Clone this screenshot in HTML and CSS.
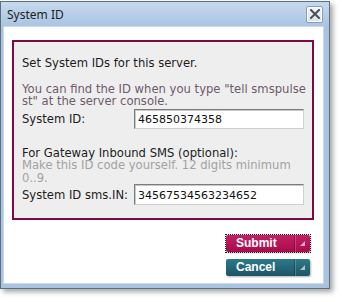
FILE: index.html
```html
<!DOCTYPE html>
<html>
<head>
<meta charset="utf-8">
<link rel="stylesheet" href="styles.css">
</head>
<body>
<div class="dialog">
  <div class="titlebar">
    <span class="title">System ID</span>
    <button class="close" aria-label="Close">
      <svg width="10" height="10" viewBox="0 0 10 10"><path d="M1 1L9 9M9 1L1 9" stroke="#4a5058" stroke-width="2" stroke-linecap="square"/></svg>
    </button>
  </div>
  <div class="body">
    <div class="box">
      <p class="intro">Set System IDs for this server.</p>
      <p class="hint">You can find the ID when you type "tell smspulse<br>st" at the server console.</p>
      <div class="row">
        <label class="label">System ID:</label>
        <input class="field" type="text" value="465850374358">
      </div>
      <p class="intro sub">For Gateway Inbound SMS (optional):</p>
      <p class="note">Make this ID code yourself. 12 digits minimum<br>0..9.</p>
      <div class="row row2">
        <label class="label">System ID sms.IN:</label>
        <input class="field" type="text" value="34567534563234652">
      </div>
    </div>
    <div class="actions">
      <div class="focus"><button class="btn submit"><span class="btxt">Submit</span><span class="bside"><i class="tri"></i></span></button></div>
      <button class="btn cancel"><span class="btxt">Cancel</span><span class="bside"><i class="tri"></i></span></button>
    </div>
  </div>
</div>
</body>
</html>
```
FILE: styles.css
```css
html, body { margin: 0; padding: 0; background: #ffffff; }
body { width: 342px; height: 302px; overflow: hidden; }

.dialog {
  margin-top: 1px;
  width: 330px;
  height: 288px;
  box-sizing: border-box;
  border: 1px solid #5f6d7c;
  background: #a9c3e0;
  box-shadow: 3px 3px 5px rgba(0,0,0,0.35);
  display: flex;
  flex-direction: column;
}

.titlebar {
  height: 24px;
  flex: none;
  display: flex;
  align-items: center;
  justify-content: space-between;
  padding: 0 6px 0 6px;
  background: linear-gradient(#c6d9ee, #aac4e2);
}
.title {
  font-family: "Noto Sans", "DejaVu Sans", sans-serif;
  font-size: 12px;
  color: #1e1e1e;
  margin-top: 1px;
}
.close {
  width: 17px;
  height: 17px;
  padding: 0;
  margin: 0;
  border: 1px solid #8a9db3;
  border-radius: 2px;
  background: linear-gradient(#f2f5f9, #d8e2ee);
  display: flex;
  align-items: center;
  justify-content: center;
  box-shadow: inset 0 0 0 1px #ffffff;
}

.body {
  flex: 1;
  margin: 0 5px 4px 2px;
  background: #ffffff;
  border: 1px solid #c9d9ea;
  display: flex;
  flex-direction: column;
  padding: 13px 0 0 8px;
}

.box {
  width: 302px;
  height: 180px;
  box-sizing: border-box;
  border: 2px solid #7b0a45;
  background: #eeeeee;
  padding: 15px 8px 0 8px;
  font-family: "DejaVu Sans", sans-serif;
  font-size: 11.6px;
  line-height: 12.5px;
  white-space: nowrap;
}
.box p { margin: 0; }
.intro { color: #1c1c1c; }
.hint { color: #6f5a6c; margin-top: 13px !important; }
.sub { margin-top: 18px !important; }
.note { color: #a2a2a2; line-height: 13px; }

.row {
  display: flex;
  align-items: center;
  margin-top: 1px;
}
.row2 { margin-top: -1px; }
.label {
  width: 112px;
  flex: none;
  color: #1c1c1c;
  padding-top: 2px;
}
.field {
  width: 170px;
  height: 20px;
  box-sizing: border-box;
  margin: 0;
  padding: 1px 3px 0 3px;
  border: 1px solid;
  border-color: #7c7c7c #d0d0d0 #d0d0d0 #7c7c7c;
  box-shadow: inset 1px 1px 0 #c8c8c8;
  background: #ffffff;
  font-family: "DejaVu Sans", sans-serif;
  font-size: 11px;
  color: #111;
  outline: none;
}
.row2 .field { height: 21px; }

.actions {
  display: flex;
  flex-direction: column;
  align-items: flex-end;
  padding-right: 12px;
  margin-top: 14px;
  gap: 6px;
}
.focus {
  border: 1px dotted #222;
  padding: 0;
  line-height: 0;
}
.btn {
  width: 84px;
  height: 17px;
  padding: 0;
  margin: 0;
  border: none;
  border-radius: 2px;
  display: flex;
  align-items: stretch;
  font-family: "Liberation Sans", Arial, sans-serif;
  font-weight: bold;
  font-size: 12px;
  color: #ffffff;
  box-shadow: 1px 1px 2px rgba(0,0,0,0.3);
}
.submit { background: linear-gradient(#c41f62, #a70c4c); }
.cancel { background: linear-gradient(#2d7a8a, #1c5566); margin-right: 1px; }
.btxt {
  flex: 1;
  text-align: left;
  padding-left: 10px;
  line-height: 17px;
}
.bside {
  width: 15px;
  flex: none;
  border-left: 1px solid rgba(0,0,0,0.25);
  box-shadow: inset 1px 0 0 rgba(255,255,255,0.2);
  display: flex;
  align-items: center;
  justify-content: center;
}
.tri {
  width: 0;
  height: 0;
  border-style: solid;
  border-width: 0 0 5px 5px;
  border-color: transparent transparent #d8d8d8 transparent;
  opacity: 0.8;
}
```
